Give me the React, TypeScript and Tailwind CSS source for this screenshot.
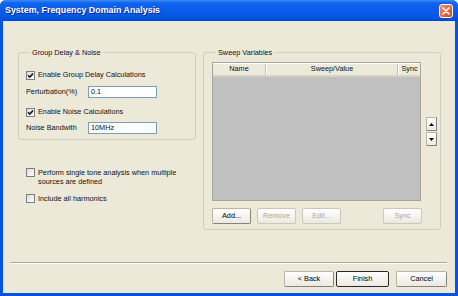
import React from 'react';

function Check({ on }: { on?: boolean }) {
  return (
    <span className="w-[9px] h-[9px] shrink-0 border border-[#7a7d82] bg-gradient-to-br from-[#dddcd5] to-white flex items-center justify-center">
      {on && (
        <svg width="7" height="7" viewBox="0 0 7 7">
          <path d="M1 3.2 L2.8 5 L6 1.6" fill="none" stroke="#1a1a1a" strokeWidth="1.6" />
        </svg>
      )}
    </span>
  );
}

function Btn({ label, w, disabled, def }: { label: string; w: string; disabled?: boolean; def?: boolean }) {
  const tone = disabled
    ? 'text-[#aca899] border-[#cbc8bb]'
    : def
      ? 'text-black border-[#2a2a2a]'
      : 'text-black border-[#b9b6a9] border-r-[#85837a] border-b-[#85837a]';
  return (
    <button
      type="button"
      className={`h-[16px] ${w} shrink-0 border rounded-[2px] bg-gradient-to-b from-white to-[#ebe9e0] leading-none ${tone}`}
    >
      {label}
    </button>
  );
}

function Arrow({ up }: { up?: boolean }) {
  return (
    <span className="w-[11px] h-[14px] border border-[#b9b6a9] border-r-[#85837a] border-b-[#85837a] rounded-[1px] bg-gradient-to-b from-white to-[#ebe9e0] flex items-center justify-center">
      <svg width="5" height="3" viewBox="0 0 5 3">
        {up ? <path d="M0 3 L2.5 0 L5 3 Z" fill="#000" /> : <path d="M0 0 L2.5 3 L5 0 Z" fill="#000" />}
      </svg>
    </span>
  );
}

export default function App() {
  return (
    <div className="w-[458px] h-[296px] bg-white font-['Liberation_Sans',Arial,sans-serif] text-[7.3px] text-[#111]">
      <div className="h-full flex flex-col rounded-t-[6px] overflow-hidden bg-[#0054e3]">
        {/* title bar */}
        <div className="h-[21px] shrink-0 flex items-center pl-[5px] pr-[5px] bg-[linear-gradient(to_bottom,#3d8ef7_0%,#0f64ec_14%,#0a5ce8_50%,#0056e4_85%,#0046d2_100%)]">
          <span className="flex-1 pt-[1px] text-white font-bold text-[8.9px] [text-shadow:1px_1px_0_#0a2a8c]">
            System, Frequency Domain Analysis
          </span>
          <span className="w-[14px] h-[14px] rounded-[3px] border border-white bg-gradient-to-br from-[#f2896a] to-[#d9461f] flex items-center justify-center">
            <svg width="8" height="8" viewBox="0 0 8 8">
              <path d="M1 1 L7 7 M7 1 L1 7" stroke="#fff" strokeWidth="1.6" strokeLinecap="round" />
            </svg>
          </span>
        </div>

        {/* body */}
        <div className="flex-1 mx-[3px] mb-[3px] bg-[#ece9d8] flex flex-col">
          <div className="flex items-start gap-[7px] pt-[27px] pl-[15px]">
            {/* left column */}
            <div className="w-[178px] flex flex-col">
              <fieldset className="border border-[#d0d0bf] rounded-[3px] pt-[12px] pl-[7px] pb-[5px]">
                <legend className="ml-[4px] px-[2px] leading-[9px]">Group Delay &amp; Noise</legend>
                <div className="h-[12px] flex items-center gap-[3px]">
                  <Check on />
                  <span>Enable Group Delay Calculations</span>
                </div>
                <div className="mt-[5px] h-[12px] flex items-center">
                  <span className="w-[62px]">Perturbation(%)</span>
                  <span className="w-[69px] h-[12px] border border-[#7f9db9] bg-white pl-[2px] flex items-center">0.1</span>
                </div>
                <div className="mt-[8px] h-[12px] flex items-center gap-[3px]">
                  <Check on />
                  <span>Enable Noise Calculations</span>
                </div>
                <div className="mt-[4px] h-[12px] flex items-center">
                  <span className="w-[62px]">Noise Bandwith</span>
                  <span className="w-[69px] h-[12px] border border-[#7f9db9] bg-white pl-[2px] flex items-center">10MHz</span>
                </div>
              </fieldset>

              <div className="mt-[28px] pl-[8px] flex items-start gap-[3px] leading-[9px]">
                <Check />
                <span className="w-[150px]">Perform single tone analysis when multiple sources are defined</span>
              </div>
              <div className="mt-[8px] pl-[8px] flex items-start gap-[3px] leading-[9px]">
                <Check />
                <span>Include all harmonics</span>
              </div>
            </div>

            {/* right column */}
            <fieldset className="w-[238px] border border-[#d0d0bf] rounded-[3px] pt-[5px] pl-[8px] pb-[5px]">
              <legend className="ml-[4px] px-[2px] leading-[9px]">Sweep Variables</legend>
              <div className="flex items-center">
                <div className="w-[209px] h-[139px] border border-[#a7a69a] bg-[#c0c0c0] flex flex-col">
                  <div className="h-[14px] shrink-0 flex bg-[#ebeadb] border-t border-white border-b-2 border-b-[#d6d2c2]">
                    <span className="w-[53px] flex items-center justify-center border-r border-[#c7c5b2]">Name</span>
                    <span className="w-[132px] flex items-center justify-center border-l border-white border-r border-r-[#c7c5b2]">Sweep/Value</span>
                    <span className="flex-1 flex items-center justify-center border-l border-white">Sync</span>
                  </div>
                </div>
                <div className="ml-[5px] flex flex-col gap-[1px]">
                  <Arrow up />
                  <Arrow />
                </div>
              </div>
              <div className="mt-[7px] w-[210px] flex gap-[6px]">
                <Btn label="Add..." w="w-[39px]" />
                <Btn label="Remove" w="w-[39px]" disabled />
                <Btn label="Edit..." w="w-[39px]" disabled />
                <span className="flex-1" />
                <Btn label="Sync" w="w-[39px]" disabled />
              </div>
            </fieldset>
          </div>

          {/* separator */}
          <div className="mt-[32px] ml-[7px] mr-[8px] border-t border-[#aca899] border-b border-b-white" />

          {/* wizard buttons */}
          <div className="mt-[7px] pr-[8px] flex justify-end">
            <Btn label="< Back" w="w-[50px]" />
            <span className="w-[2px]" />
            <Btn label="Finish" w="w-[53px]" def />
            <span className="w-[7px]" />
            <Btn label="Cancel" w="w-[51px]" />
          </div>
        </div>
      </div>
    </div>
  );
}
